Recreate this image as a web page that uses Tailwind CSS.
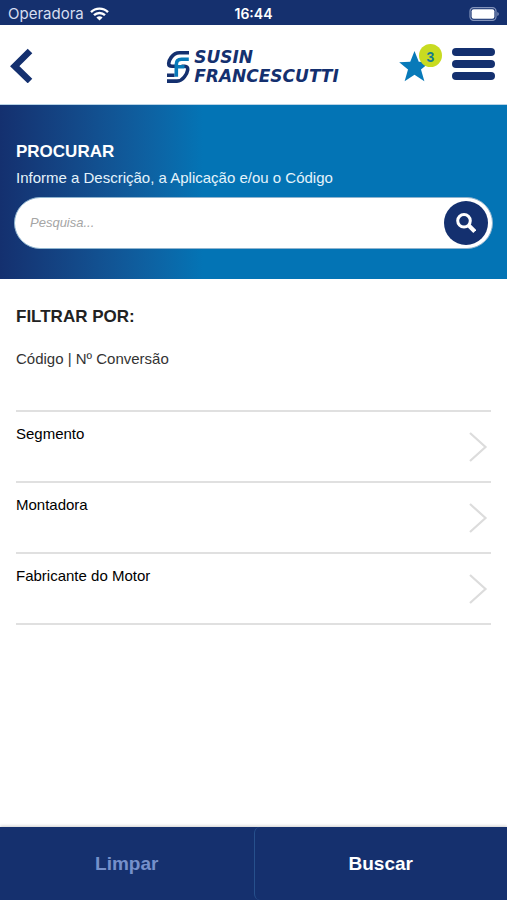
<!DOCTYPE html>
<html lang="pt-BR">
<head>
<meta charset="utf-8">
<meta name="viewport" content="width=device-width, initial-scale=1">
<title>Susin Francescutti</title>
<script src="https://cdn.jsdelivr.net/npm/@tailwindcss/browser@4"></script>
</head>
<body class="flex min-h-screen flex-col bg-white font-['Liberation_Sans',Arial,sans-serif] text-[15px] leading-5 text-black">
  <div class="grid h-[25px] grid-cols-3 items-center bg-[#15306e] px-2 pt-0.5 font-[Inter,sans-serif] text-sm leading-5 text-white">
    <div class="flex items-center gap-1.5 text-[#d5ddf0]">
      <span class="text-[15px]">Operadora</span>
      <svg class="h-[14px] w-[19px]" viewBox="0 0 19 14" fill="none" stroke="#fff" stroke-width="2.4" aria-hidden="true">
        <path d="M1 5.1C5.6.4 13.4.4 18 5.1M4 8.2c3.1-3 7.9-3 11 0"/>
        <path d="M9.5 13.6 6.4 10.5c1.8-1.6 4.4-1.6 6.2 0z" fill="#fff" stroke="none"/>
      </svg>
    </div>
    <span class="text-center font-semibold">16:44</span>
    <svg class="h-[14px] w-[30px] justify-self-end" viewBox="0 0 30 14" aria-hidden="true">
      <rect x="1" y=".7" width="26" height="12.6" rx="3.6" fill="none" stroke="#8494bb" stroke-width="1.2"/>
      <rect x="2.6" y="2.3" width="22.8" height="9.4" rx="2" fill="#fff"/>
      <path d="M28.3 5v4q1.5-.6 1.5-2t-1.5-2z" fill="#8494bb"/>
    </svg>
  </div>

  <header class="grid h-20 grid-cols-[1fr_auto_1fr] items-center border-b border-[#b8d3e6] pr-3 pl-2.5">
    <button type="button" aria-label="Voltar" class="h-9 w-6">
      <svg class="h-9 w-6" viewBox="0 0 24 36" fill="none" stroke="#14306f" stroke-width="6.5" aria-hidden="true"><path d="M20 4 4.7 19.2 20 34"/></svg>
    </button>
    <a href="#" class="flex items-center gap-1 pt-1 text-[#14306f]">
      <svg class="h-8 w-6" viewBox="0 0 24 32" fill="none" aria-hidden="true">
        <path d="M23 1.8H13.5Q8.5 1.8 5.2 6.4 2.7 9.8 2.7 12.4q0 2.8 3.4 2.8h3" stroke="#14306f" stroke-width="3.6"/>
        <path d="M15.5 15.2h3.2q3.3 0 3 3.6-.3 3-3.4 7.2-3.1 4.1-7.3 4.1H1M1 24.3h7.6" stroke="#14306f" stroke-width="3.6"/>
        <path d="M22.8 8.2h-7.3q-5.2 0-5.2 5.2v12.4M10.3 15.7h8.2" stroke="#087ab9" stroke-width="3.6"/>
      </svg>
      <span class="flex flex-col font-['DejaVu_Sans',sans-serif] text-[17px] leading-[19px] font-bold italic"><span>SUSIN</span><span>FRANCESCUTTI</span></span>
    </a>
    <div class="flex items-center justify-end gap-2.5 pb-0.5">
      <button type="button" aria-label="Favoritos: 3" class="relative h-10 w-[43px]">
        <svg class="absolute bottom-0.5 left-0 size-[31px]" viewBox="0 0 32 32" fill="#087ab9" aria-hidden="true"><path d="m16 0 4.4 11.2 11.4.5-9.1 7.4 3.5 12.1-10.2-6.7L5.8 31.2l3.5-12.1L.2 11.7l11.4-.5z"/></svg>
        <span class="absolute top-0 right-0 flex size-[23px] items-center justify-center rounded-full bg-[#c8db21] pt-1 text-sm font-bold text-[#147a91]">3</span>
      </button>
      <button type="button" aria-label="Menu" class="flex w-[43px] flex-col gap-1">
        <span class="h-2 rounded-full bg-[#14306f]"></span>
        <span class="h-2 rounded-full bg-[#14306f]"></span>
        <span class="h-2 rounded-full bg-[#14306f]"></span>
      </button>
    </div>
  </header>

  <main class="flex-1">
    <form class="bg-linear-to-r from-[#14306f] to-[#0374b5] to-40% px-[14px] pt-[35px] pb-[30px]">
      <h1 class="px-0.5 text-[17px] leading-6 font-bold text-white"><label for="q">PROCURAR</label></h1>
      <p class="mt-1 mb-[9px] px-0.5 text-[#e5f3fb]">Informe a Descrição, a Aplicação e/ou o Código</p>
      <div class="flex h-[52px] items-center rounded-full border border-[#8fb4cf] bg-white pr-1 pl-[15px]">
        <input id="q" type="search" placeholder="Pesquisa..." class="min-w-0 flex-1 bg-transparent text-[13px] italic outline-none placeholder:text-[#a5a5a5]">
        <button type="submit" aria-label="Buscar" class="flex size-11 items-center justify-center rounded-full bg-[#14306f]">
          <svg class="size-5" viewBox="0 0 20 20" fill="none" stroke="#fff" aria-hidden="true"><circle cx="8" cy="7.8" r="6.3" stroke-width="3"/><path d="m12.8 12.5 6 6" stroke-width="4.2"/></svg>
        </button>
      </div>
    </form>

    <section class="px-4 pt-[26px]">
      <h2 class="text-[17px] leading-6 font-bold text-[#222]">FILTRAR POR:</h2>
      <p class="mt-5 text-[#333]">Código | Nº Conversão</p>
      <ul class="mt-[41px] border-t-2 border-[#e0e0e0]">
        <li class="border-b-2 border-[#e0e0e0]">
          <button type="button" class="flex h-[69px] w-full justify-between pt-3 pr-[3px] text-left">Segmento
            <svg class="mt-[7px] h-8 w-5" viewBox="0 0 20 32" fill="none" stroke="#dcdcdc" stroke-width="2.2" aria-hidden="true"><path d="m2 2 15.5 14L2 30"/></svg>
          </button>
        </li>
        <li class="border-b-2 border-[#e0e0e0]">
          <button type="button" class="flex h-[69px] w-full justify-between pt-3 pr-[3px] text-left">Montadora
            <svg class="mt-[7px] h-8 w-5" viewBox="0 0 20 32" fill="none" stroke="#dcdcdc" stroke-width="2.2" aria-hidden="true"><path d="m2 2 15.5 14L2 30"/></svg>
          </button>
        </li>
        <li class="border-b-2 border-[#e0e0e0]">
          <button type="button" class="flex h-[69px] w-full justify-between pt-3 pr-[3px] text-left">Fabricante do Motor
            <svg class="mt-[7px] h-8 w-5" viewBox="0 0 20 32" fill="none" stroke="#dcdcdc" stroke-width="2.2" aria-hidden="true"><path d="m2 2 15.5 14L2 30"/></svg>
          </button>
        </li>
      </ul>
    </section>
  </main>

  <footer class="grid h-[73px] grid-cols-2 bg-[#15306e] text-[19px] font-bold shadow-[0_-1px_3px_#0003]">
    <button type="button" class="text-[#7590cb]">Limpar</button>
    <button type="button" class="rounded-l-md border-l border-[#27508c] text-white">Buscar</button>
  </footer>
</body>
</html>
